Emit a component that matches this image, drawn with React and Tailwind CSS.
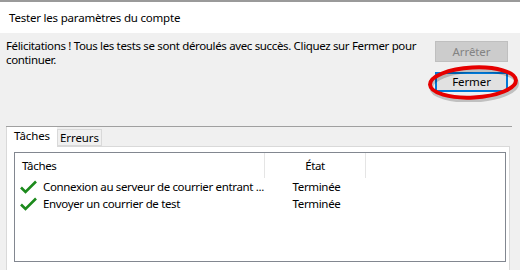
import React from "react";

function Check() {
  return (
    <svg width="17" height="14" viewBox="0 0 17 14" className="shrink-0">
      <path d="M1 7.5 L5.5 12 L16 1.5" fill="none" stroke="#1c8a1c" strokeWidth="2.6" strokeLinecap="butt" strokeLinejoin="miter" />
    </svg>
  );
}

export default function App() {
  const font = { fontFamily: '"Noto Sans", "Open Sans", sans-serif' };
  return (
    <div className="relative w-[520px] h-[270px] overflow-hidden bg-[#f0f0f0] text-[11.5px] tracking-[-0.35px] text-black" style={font}>
      <div className="h-[2px] bg-[#9a9a9a]" />
      <div className="h-[31px] bg-white flex items-center pl-[9px] tracking-[-0.2px]">
        Tester les paramètres du compte
      </div>
      <div className="h-[93px] flex">
        <div className="w-[435px] shrink-0 pt-[6px] pl-[6px] leading-[14px] whitespace-nowrap">
          Félicitations ! Tous les tests se sont déroulés avec succès. Cliquez sur Fermer pour
          <br />
          continuer.
        </div>
        <div className="shrink-0 pt-[8px] flex flex-col gap-[10px] tracking-[-0.1px]">
          <div className="w-[73px] h-[21px] bg-[#cccccc] border border-[#bfbfbf] text-[#838383] flex items-center justify-center">
            Arrêter
          </div>
          <div className="w-[73px] h-[20px] bg-[#e1e1e1] border-2 border-[#0078d7] flex items-center justify-center">
            Fermer
          </div>
        </div>
      </div>
      <div className="ml-[6px] w-[506px] h-[1px] bg-[#a0a0a0]" />
      <div className="flex ml-[6px] h-[19px] tracking-[-0.1px]">
        <div className="w-[51px] bg-white border-l border-[#d9d9d9] flex items-center justify-center pb-[2px] relative z-10 h-[20px]">
          Tâches
        </div>
        <div className="w-[45px] mt-[2px] h-[17px] bg-[#f0f0f0] border border-[#d9d9d9] flex items-center justify-center">
          Erreurs
        </div>
      </div>
      <div className="ml-[6px] w-[504px] h-[130px] bg-white border border-[#d9d9d9] pt-[5px] pl-[7px] pr-[3px]">
        <div className="h-[110px] border border-[#828790] bg-white">
          <div className="flex h-[25px]">
            <div className="w-[250px] pl-[7px] flex items-center border-r border-[#e5e5e5]">Tâches</div>
            <div className="w-[101px] flex items-center justify-center border-r border-[#e5e5e5]">État</div>
          </div>
          {[
            "Connexion au serveur de courrier entrant ...",
            "Envoyer un courrier de test",
          ].map((t) => (
            <div key={t} className="flex h-[17px] items-center">
              <div className="w-[251px] pl-[5px] flex items-center gap-[6px] whitespace-nowrap">
                <Check />
                <span>{t}</span>
              </div>
              <div className="w-[101px] text-center">Terminée</div>
            </div>
          ))}
        </div>
      </div>
      <svg className="absolute left-[426px] top-[64px]" width="94" height="38" viewBox="0 0 94 38">
        <ellipse cx="47" cy="19.5" rx="43" ry="15" fill="none" stroke="#00000033" strokeWidth="4" transform="rotate(-3 47 19) translate(1 2)" />
        <ellipse cx="47" cy="18.5" rx="43" ry="15" fill="none" stroke="#e60000" strokeWidth="4" transform="rotate(-3 47 19)" />
      </svg>
    </div>
  );
}
